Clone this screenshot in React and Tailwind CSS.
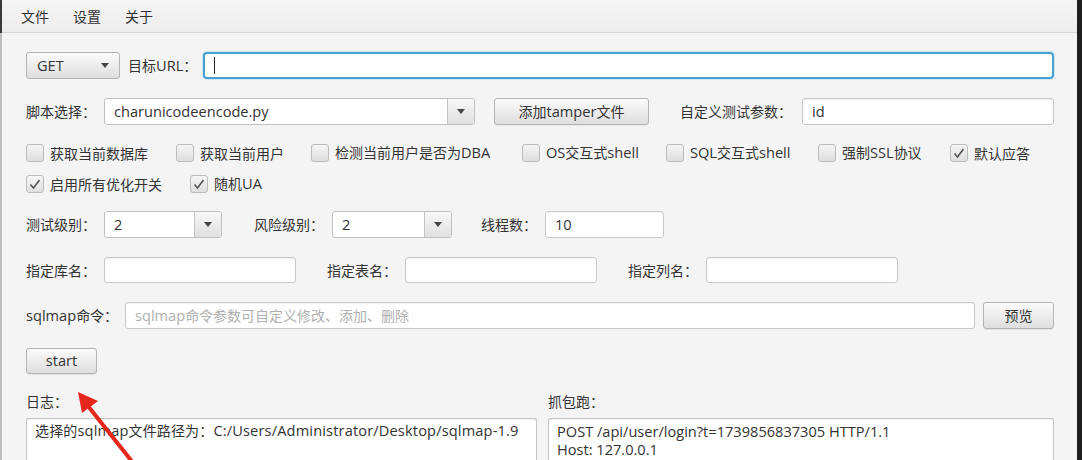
import React from "react";

const font = { fontFamily: '"Open Sans", "Noto Sans CJK SC", sans-serif' };

function T({ children }) {
  if (typeof children !== "string") return children;
  const parts = children.split(/([\x20-\x7E]+)/).filter((p) => p !== "");
  return (
    <>
      {parts.map((p, i) =>
        /^[\x20-\x7E]+$/.test(p) ? (
          <span key={i} className="text-[14.6px]">
            {p}
          </span>
        ) : (
          <span key={i}>{p}</span>
        )
      )}
    </>
  );
}

function Arrow() {
  return (
    <svg width="8" height="5" viewBox="0 0 8 5" className="block">
      <path d="M0 0 L8 0 L4 5 Z" fill="#444" />
    </svg>
  );
}

function Btn({ children, className = "" }) {
  return (
    <div
      className={
        "flex items-center justify-center rounded-[3px] border border-[#b4b4b4] bg-gradient-to-b from-[#fbfbfb] to-[#dedede] text-[14px] text-[#333] shadow-[0_1px_0_rgba(0,0,0,0.06)] " +
        className
      }
    >
      <T>{children}</T>
    </div>
  );
}

function Input({ className = "", children }) {
  return (
    <div
      className={
        "flex items-center whitespace-nowrap rounded-[3px] border border-[#c8c8c8] bg-white pl-[9px] text-[14px] text-[#333] shadow-[inset_0_1px_1px_rgba(0,0,0,0.05)] " +
        className
      }
    >
      <T>{children}</T>
    </div>
  );
}

function Combo({ value, className = "" }) {
  return (
    <div
      className={
        "flex overflow-hidden rounded-[3px] border border-[#c0c0c0] bg-white text-[14px] text-[#333] " +
        className
      }
    >
      <div className="flex flex-1 items-center pl-[9px]">
        <T>{value}</T>
      </div>
      <div className="flex w-[27px] items-center justify-center border-l border-[#c4c4c4] bg-gradient-to-b from-[#f8f8f8] to-[#e0e0e0]">
        <Arrow />
      </div>
    </div>
  );
}

function Label({ children, className = "" }) {
  return (
    <span className={"flex items-center whitespace-nowrap text-[14px] " + className}>
      <T>{children}</T>
    </span>
  );
}

function Check({ checked, label, w }) {
  return (
    <div className="flex h-[18px] items-center" style={{ width: w }}>
      <div className="flex h-[18px] w-[18px] items-center justify-center rounded-[3px] border border-[#bcbcbc] bg-gradient-to-b from-[#f6f6f6] to-[#dedede]">
        {checked && (
          <svg width="12" height="11" viewBox="0 0 12 11">
            <path d="M1.5 5.5 L4.5 9 L10.5 1" fill="none" stroke="#555" strokeWidth="1.6" />
          </svg>
        )}
      </div>
      <span className="ml-[6px] whitespace-nowrap text-[14px] text-[#333]">
        <T>{label}</T>
      </span>
    </div>
  );
}

export default function App() {
  return (
    <div
      className="relative flex h-[460px] w-[1082px] overflow-hidden bg-[#f4f4f4] text-[#333]"
      style={font}
    >
      <div className="flex w-[2px] flex-col">
        <div className="h-[33px] bg-[#3a3a3a]" />
        <div className="flex-1 bg-[#bdbdbd]" />
      </div>
      <div className="flex flex-1 flex-col">
        {/* menu */}
        <div className="flex h-[33px] items-center gap-[24px] border-b border-[#d6d6d6] bg-gradient-to-b from-[#f5f5f5] to-[#ededed] pl-[19px] text-[14px] text-[#333]">
          <span>文件</span>
          <span>设置</span>
          <span>关于</span>
        </div>
        <div className="flex flex-1 flex-col pl-[24px] pr-[23px]">
          {/* row 1 */}
          <div className="mt-[19px] flex h-[27px] items-stretch">
            <div className="flex w-[94px] items-center justify-between rounded-[3px] border border-[#b4b4b4] bg-gradient-to-b from-[#fbfbfb] to-[#dedede] px-[10px] text-[14px] text-[#333]">
              <span className="text-[14.6px]">GET</span>
              <Arrow />
            </div>
            <Label className="ml-[8px]">目标URL：</Label>
            <div className="ml-[6px] flex flex-1 items-center rounded-[4px] border-2 border-[#4aa0cf] bg-white pl-[9px] shadow-[0_0_0_1px_#cbe6f3]">
              <span className="h-[17px] w-px bg-[#222]" />
            </div>
          </div>
          {/* row 2 */}
          <div className="mt-[19px] flex h-[27px] items-stretch">
            <Label className="w-[78px]">脚本选择：</Label>
            <Combo value="charunicodeencode.py" className="w-[371px]" />
            <Btn className="ml-[19px] w-[155px]">添加tamper文件</Btn>
            <Label className="ml-[31px] w-[122px]">自定义测试参数：</Label>
            <Input className="flex-1">id</Input>
          </div>
          {/* row 3 */}
          <div className="mt-[19px] flex">
            <Check w={150} label="获取当前数据库" />
            <Check w={135} label="获取当前用户" />
            <Check w={211} label="检测当前用户是否为DBA" />
            <Check w={144} label="OS交互式shell" />
            <Check w={152} label="SQL交互式shell" />
            <Check w={132} label="强制SSL协议" />
            <Check w={100} checked label="默认应答" />
          </div>
          {/* row 4 */}
          <div className="mt-[13px] flex">
            <Check w={164} checked label="启用所有优化开关" />
            <Check w={100} checked label="随机UA" />
          </div>
          {/* row 5 */}
          <div className="mt-[18px] flex h-[27px] items-stretch">
            <Label className="w-[78px]">测试级别：</Label>
            <Combo value="2" className="w-[118px]" />
            <Label className="ml-[32px] w-[78px]">风险级别：</Label>
            <Combo value="2" className="w-[120px]" />
            <Label className="ml-[29px] w-[64px]">线程数：</Label>
            <Input className="w-[119px]">10</Input>
          </div>
          {/* row 6 */}
          <div className="mt-[19px] flex h-[26px] items-stretch">
            <Label className="w-[78px]">指定库名：</Label>
            <Input className="w-[192px]" />
            <Label className="ml-[31px] w-[78px]">指定表名：</Label>
            <Input className="w-[192px]" />
            <Label className="ml-[31px] w-[78px]">指定列名：</Label>
            <Input className="w-[192px]" />
          </div>
          {/* row 7 */}
          <div className="mt-[19px] flex h-[27px] items-stretch">
            <Label className="w-[99px]">sqlmap命令：</Label>
            <Input className="flex-1 text-[#b0b0b0]">sqlmap命令参数可自定义修改、添加、删除</Input>
            <Btn className="ml-[8px] w-[71px]">预览</Btn>
          </div>
          {/* start */}
          <div className="mt-[19px] flex">
            <Btn className="h-[26px] w-[71px]">start</Btn>
          </div>
          {/* bottom */}
          <div className="mt-[18px] flex flex-1">
            <div className="flex w-[511px] flex-col">
              <span className="h-[20px] text-[14px] leading-[20px]">日志：</span>
              <div className="mt-[6px] flex-1 overflow-hidden whitespace-nowrap rounded-t-[3px] border border-b-0 border-[#c4c4c4] bg-white pl-[8px] pt-[2px] text-[14px] leading-[18px] tracking-[0.15px] shadow-[inset_0_1px_1px_rgba(0,0,0,0.05)]">
                <T>选择的sqlmap文件路径为：C:/Users/Administrator/Desktop/sqlmap-1.9</T>
              </div>
            </div>
            <div className="ml-[11px] flex flex-1 flex-col">
              <span className="h-[20px] text-[14px] leading-[20px]">抓包跑：</span>
              <div className="mt-[6px] flex-1 overflow-hidden whitespace-nowrap rounded-t-[3px] border border-b-0 border-[#c4c4c4] bg-white pl-[8px] pt-[3px] text-[14.6px] leading-[18px] shadow-[inset_0_1px_1px_rgba(0,0,0,0.05)]">
                <div>POST /api/user/login?t=1739856837305 HTTP/1.1</div>
                <div>Host: 127.0.0.1</div>
              </div>
            </div>
          </div>
        </div>
      </div>
      <div className="w-[5px] bg-[#1e1e1e]" />
      {/* red arrow annotation */}
      <svg
        className="pointer-events-none absolute left-0 top-0"
        width="1082"
        height="460"
        viewBox="0 0 1082 460"
      >
        <line x1="134" y1="464" x2="88" y2="406" stroke="#e5261b" strokeWidth="4" strokeLinecap="round" />
        <path d="M78 392 L98 401 L82 413 Z" fill="#e5261b" />
      </svg>
    </div>
  );
}
